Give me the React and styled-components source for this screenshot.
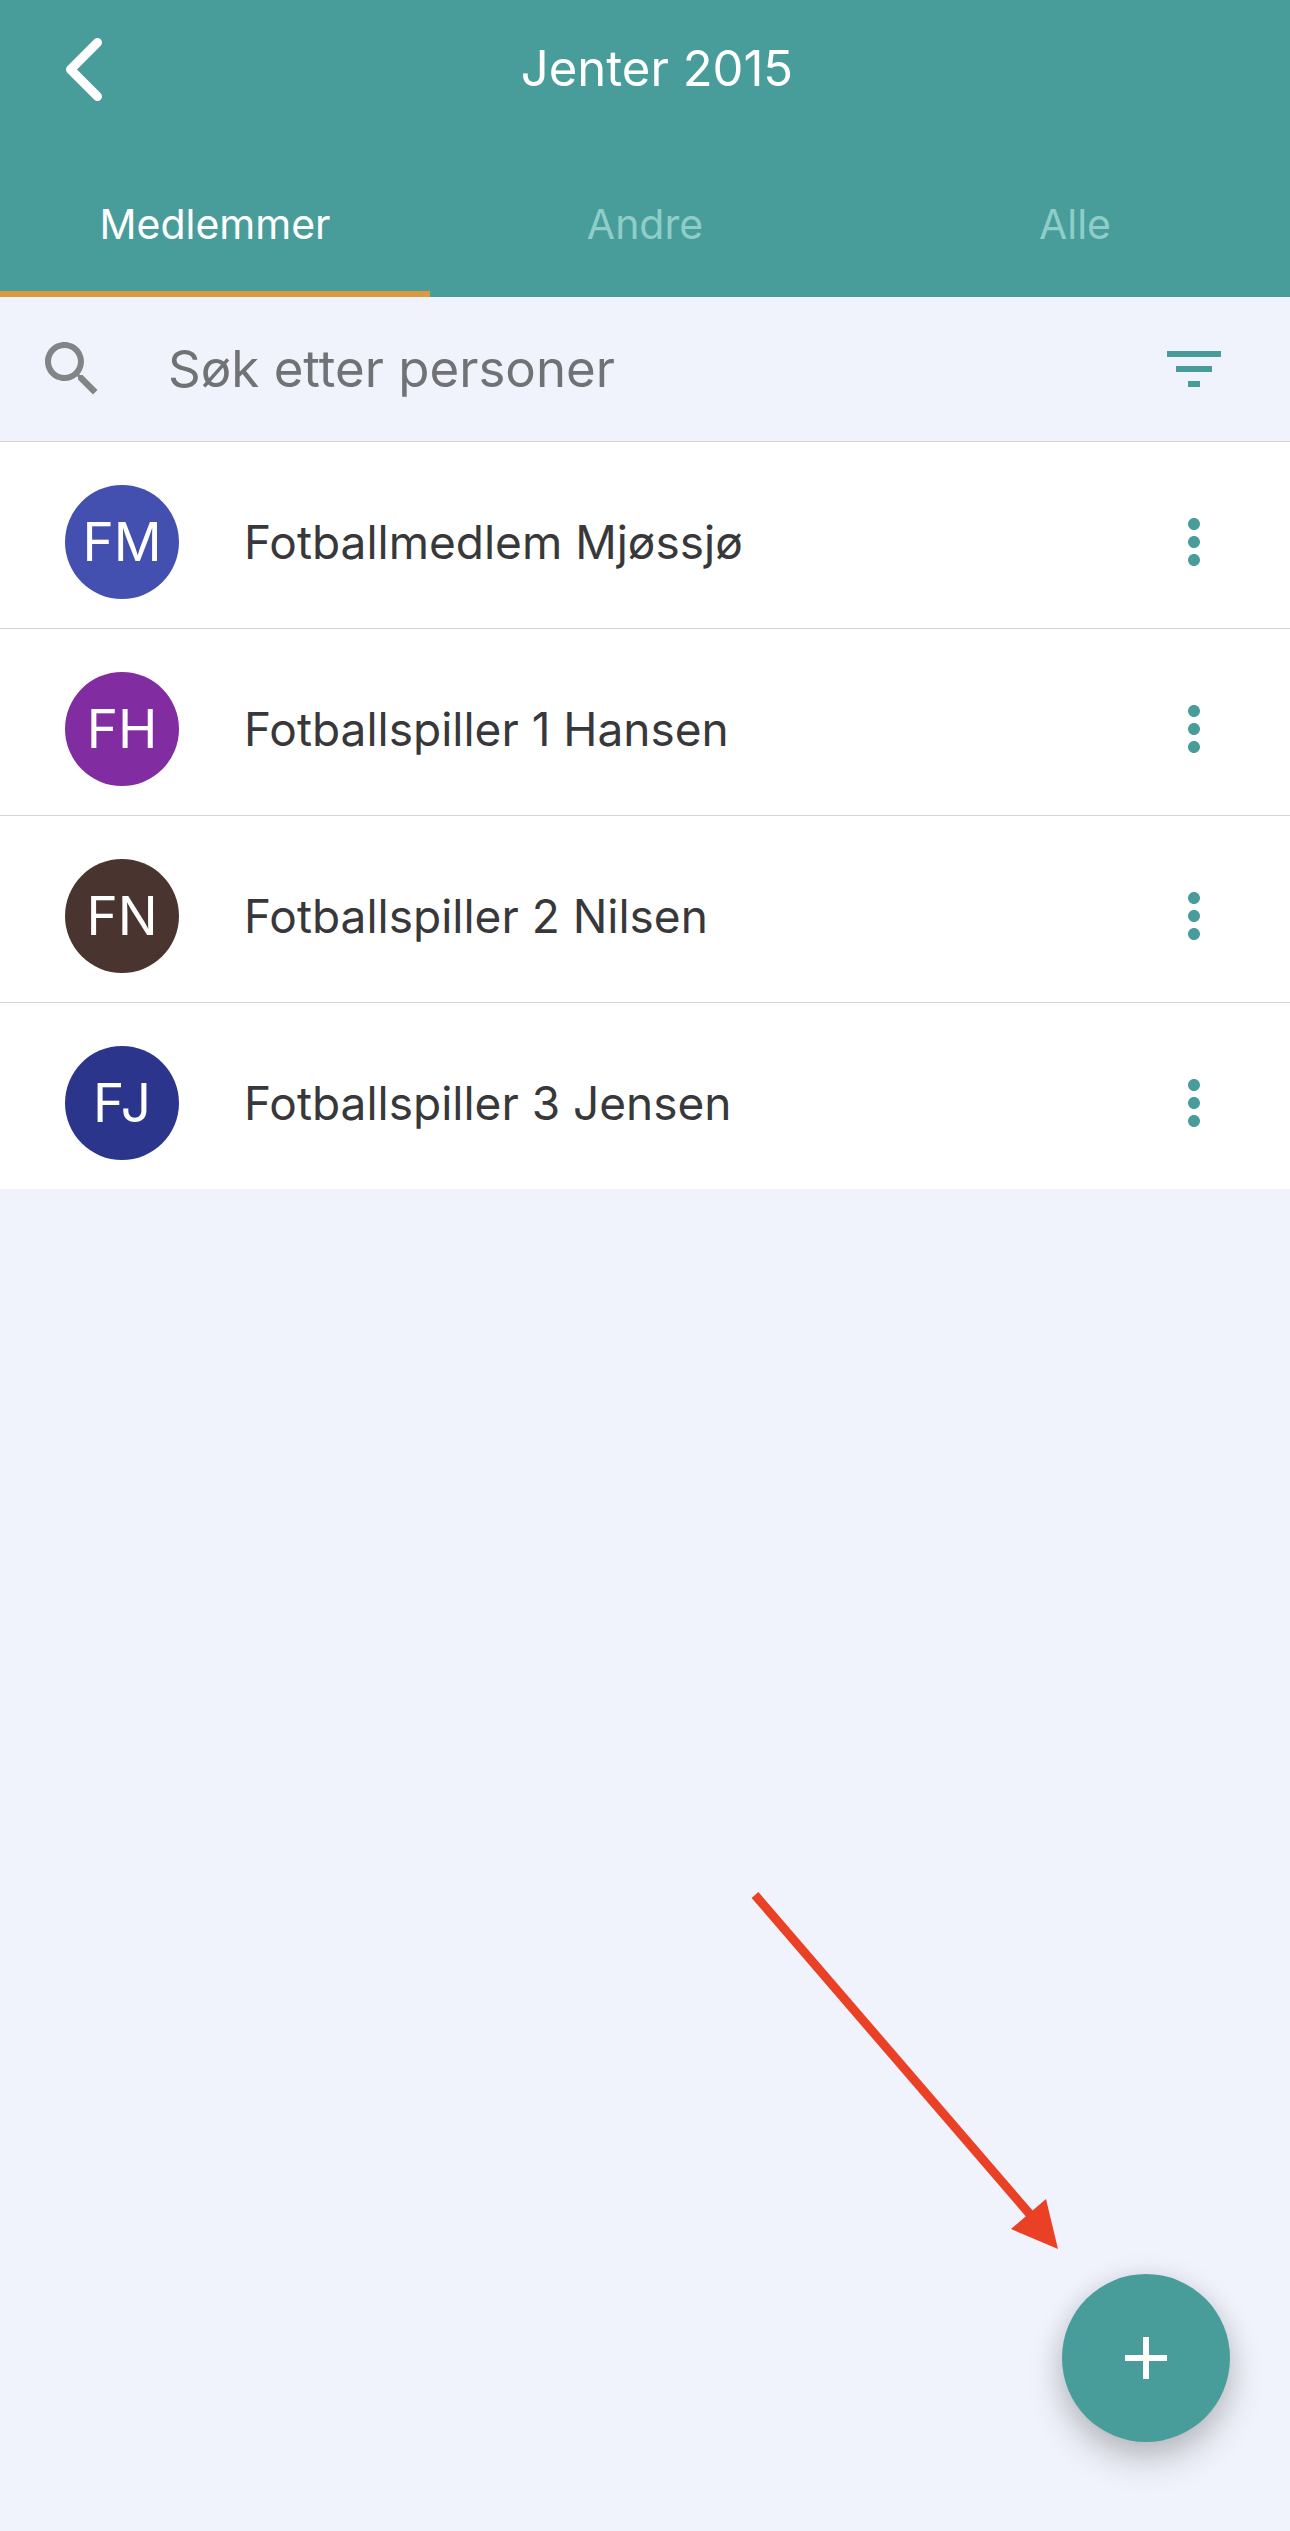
import { useState } from "react";
import styled, { createGlobalStyle } from "styled-components";

const tabs = ["Medlemmer", "Andre", "Alle"];

const members = [
  { name: "Fotballmedlem Mjøssjø", initials: "FM", color: "#4350af" },
  { name: "Fotballspiller 1 Hansen", initials: "FH", color: "#822ca2" },
  { name: "Fotballspiller 2 Nilsen", initials: "FN", color: "#4a342f" },
  { name: "Fotballspiller 3 Jensen", initials: "FJ", color: "#2b358c" },
];

const Icon = ({ path }) => (
  <svg width="72" height="72" viewBox="0 0 24 24" fill="currentColor" aria-hidden="true">
    <path d={path} />
  </svg>
);

const SEARCH =
  "M15.5 14h-.79l-.28-.27C15.41 12.59 16 11.11 16 9.5 16 5.91 13.09 3 9.5 3S3 5.91 3 9.5 5.91 16 9.5 16c1.61 0 3.09-.59 4.23-1.57l.27.28v.79l5 4.99L20.49 19l-4.99-5zm-6 0C7.01 14 5 11.99 5 9.5S7.01 5 9.5 5 14 7.01 14 9.5 11.99 14 9.5 14z";
const FILTER = "M10 18h4v-2h-4v2zM3 6v2h18V6H3zm3 7h12v-2H6v2z";
const MORE =
  "M12 8c1.1 0 2-.9 2-2s-.9-2-2-2-2 .9-2 2 .9 2 2 2zm0 2c-1.1 0-2 .9-2 2s.9 2 2 2 2-.9 2-2-.9-2-2-2zm0 6c-1.1 0-2 .9-2 2s.9 2 2 2 2-.9 2-2-.9-2-2-2z";
const ADD = "M19 13h-6v6h-2v-6H5v-2h6V5h2v6h6v2z";

const App = () => {
  const [activeTab, setActiveTab] = useState(0);
  const [query, setQuery] = useState("");
  const visible = members.filter((member) =>
    member.name.toLowerCase().includes(query.toLowerCase())
  );
  return (
    <Page>
      <GlobalStyle />
      <Header>
        <TitleBar>
          <BackButton type="button" aria-label="Tilbake">
            <svg width="48" height="72" viewBox="0 0 48 72" aria-hidden="true">
              <path
                d="M37.5 9.5 10.5 36.5l27 27"
                fill="none"
                stroke="currentColor"
                strokeWidth="9"
                strokeLinecap="round"
                strokeLinejoin="round"
              />
            </svg>
          </BackButton>
          <Title>Jenter 2015</Title>
        </TitleBar>
        <Tabs role="tablist">
          {tabs.map((tab, index) => (
            <Tab
              key={tab}
              type="button"
              role="tab"
              aria-selected={activeTab === index}
              $active={activeTab === index}
              onClick={() => setActiveTab(index)}
            >
              {tab}
            </Tab>
          ))}
        </Tabs>
      </Header>
      <SearchBar>
        <SearchLabel htmlFor="search">
          <Icon path={SEARCH} />
        </SearchLabel>
        <SearchInput
          id="search"
          type="text"
          aria-label="Søk etter personer"
          placeholder="Søk etter personer"
          value={query}
          onChange={(e) => setQuery(e.target.value)}
        />
        <IconButton type="button" aria-label="Filtrer">
          <Icon path={FILTER} />
        </IconButton>
      </SearchBar>
      <MemberList>
        {visible.map((member) => (
          <MemberRow key={member.name}>
            <Avatar $color={member.color}>{member.initials}</Avatar>
            <MemberName>{member.name}</MemberName>
            <IconButton type="button" aria-label={`Valg for ${member.name}`}>
              <Icon path={MORE} />
            </IconButton>
          </MemberRow>
        ))}
      </MemberList>
      <Arrow width="310" height="360" viewBox="0 0 310 360" aria-hidden="true">
        <path d="M5 5 284 329" stroke="#ea4025" strokeWidth="9" />
        <path d="M296 309 261 339 308 359Z" fill="#ea4025" />
      </Arrow>
      <AddButton type="button" aria-label="Legg til">
        <Icon path={ADD} />
      </AddButton>
    </Page>
  );
};
export default App;

const GlobalStyle = createGlobalStyle`
  * {
    box-sizing: border-box;
  }
  body {
    margin: 0;
    background: #f0f3fb;
    font-family: Inter, "Liberation Sans", sans-serif;
  }
  button {
    border: 0;
    padding: 0;
    background: none;
    font-family: inherit;
    cursor: pointer;
  }
  svg {
    display: block;
  }
`;
const Page = styled.main`
  position: relative;
  min-height: 100vh;
`;
const Header = styled.header`
  background: #489d9b;
  color: #ffffff;
`;
const TitleBar = styled.div`
  display: flex;
  align-items: center;
  height: 138px;
  padding: 0 84px 0 60px;
`;
const BackButton = styled.button`
  display: flex;
  color: inherit;
`;
const Title = styled.h1`
  flex: 1;
  margin: 0;
  font-size: 49px;
  line-height: 60px;
  font-weight: 400;
  text-align: center;
`;
const Tabs = styled.div`
  display: grid;
  grid-template-columns: repeat(3, 1fr);
`;
const Tab = styled.button`
  padding: 60px 0 40px;
  border-bottom: 6px solid ${(props) => (props.$active ? "#dc9a40" : "transparent")};
  color: ${(props) => (props.$active ? "#ffffff" : "#8fcdc9")};
  font-size: 41px;
  line-height: 53px;
`;
const SearchBar = styled.div`
  display: flex;
  align-items: center;
  padding: 36px 60px 36px 36px;
  border-bottom: 1px solid #d3d4d8;
`;
const SearchLabel = styled.label`
  color: #838487;
`;
const SearchInput = styled.input`
  flex: 1;
  min-width: 0;
  margin: 0 60px;
  padding: 0;
  border: 0;
  outline: none;
  background: none;
  color: #38383a;
  font-family: inherit;
  font-size: 51px;
  line-height: 72px;
  &::placeholder {
    color: #717276;
    opacity: 1;
  }
`;
const IconButton = styled.button`
  display: flex;
  color: #489d9b;
`;
const MemberList = styled.ul`
  margin: 0;
  padding: 0;
  list-style: none;
  background: #ffffff;
`;
const MemberRow = styled.li`
  display: flex;
  align-items: center;
  padding: 43px 60px 29px 65px;
  & + & {
    border-top: 1px solid #d3d4d8;
  }
`;
const Avatar = styled.div`
  display: flex;
  align-items: center;
  justify-content: center;
  width: 114px;
  height: 114px;
  border-radius: 50%;
  background: ${(props) => props.$color};
  color: #ffffff;
  font-size: 53px;
  line-height: 72px;
`;
const MemberName = styled.span`
  flex: 1;
  margin-left: 65px;
  color: #38383a;
  font-size: 46px;
  line-height: 60px;
`;
const Arrow = styled.svg`
  position: absolute;
  right: 230px;
  bottom: 281px;
`;
const AddButton = styled.button`
  position: fixed;
  right: 60px;
  bottom: 89px;
  display: flex;
  align-items: center;
  justify-content: center;
  width: 168px;
  height: 168px;
  border-radius: 50%;
  background: #489d9b;
  color: #ffffff;
  box-shadow: 0 18px 36px rgba(0, 0, 0, 0.2), 0 3px 30px rgba(0, 0, 0, 0.1);
`;
